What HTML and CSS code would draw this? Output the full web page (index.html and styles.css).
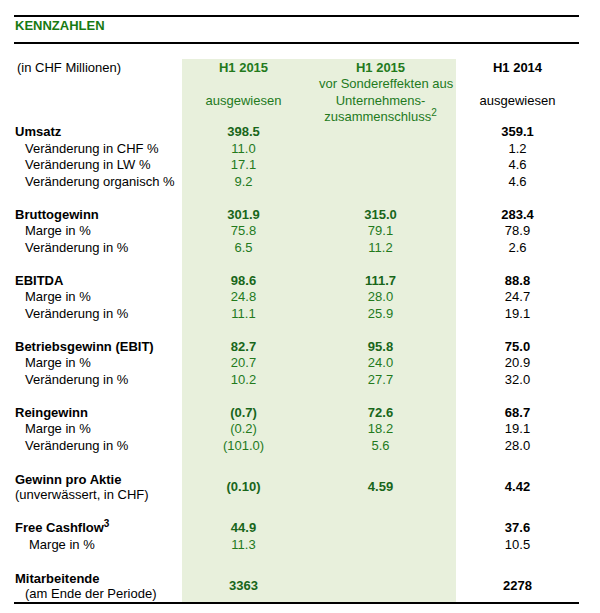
FILE: index.html
```html
<!DOCTYPE html>
<html lang="de">
<head>
<meta charset="utf-8">
<title>Kennzahlen</title>
<link rel="stylesheet" href="styles.css">
</head>
<body>
<div class="page">
  <div class="titlebar"><h1 class="title">KENNZAHLEN</h1></div>
  <div class="table">
    <div class="r head">
      <div class="l unit">(in CHF Millionen)</div>
      <div class="v g"><span class="b">H1 2015</span><span class="blank"></span><span>ausgewiesen</span></div>
      <div class="v g"><span class="b">H1 2015</span><span>vor Sondereffekten aus</span><span>Unternehmens-</span><span>zusammenschluss<sup>2</sup></span></div>
      <div class="v k"><span class="b">H1 2014</span><span class="blank"></span><span>ausgewiesen</span></div>
    </div>

    <div class="r"><div class="l b">Umsatz</div><div class="v g b">398.5</div><div class="v g"></div><div class="v k b">359.1</div></div>
    <div class="r"><div class="l sub">Veränderung in CHF %</div><div class="v g">11.0</div><div class="v g"></div><div class="v k">1.2</div></div>
    <div class="r"><div class="l sub">Veränderung in LW %</div><div class="v g">17.1</div><div class="v g"></div><div class="v k">4.6</div></div>
    <div class="r"><div class="l sub">Veränderung organisch %</div><div class="v g">9.2</div><div class="v g"></div><div class="v k">4.6</div></div>
    <div class="r gap"></div>

    <div class="r"><div class="l b">Bruttogewinn</div><div class="v g b">301.9</div><div class="v g b">315.0</div><div class="v k b">283.4</div></div>
    <div class="r"><div class="l sub">Marge in %</div><div class="v g">75.8</div><div class="v g">79.1</div><div class="v k">78.9</div></div>
    <div class="r"><div class="l sub">Veränderung in %</div><div class="v g">6.5</div><div class="v g">11.2</div><div class="v k">2.6</div></div>
    <div class="r gap"></div>

    <div class="r"><div class="l b">EBITDA</div><div class="v g b">98.6</div><div class="v g b">111.7</div><div class="v k b">88.8</div></div>
    <div class="r"><div class="l sub">Marge in %</div><div class="v g">24.8</div><div class="v g">28.0</div><div class="v k">24.7</div></div>
    <div class="r"><div class="l sub">Veränderung in %</div><div class="v g">11.1</div><div class="v g">25.9</div><div class="v k">19.1</div></div>
    <div class="r gap"></div>

    <div class="r"><div class="l b">Betriebsgewinn (EBIT)</div><div class="v g b">82.7</div><div class="v g b">95.8</div><div class="v k b">75.0</div></div>
    <div class="r"><div class="l sub">Marge in %</div><div class="v g">20.7</div><div class="v g">24.0</div><div class="v k">20.9</div></div>
    <div class="r"><div class="l sub">Veränderung in %</div><div class="v g">10.2</div><div class="v g">27.7</div><div class="v k">32.0</div></div>
    <div class="r gap"></div>

    <div class="r"><div class="l b">Reingewinn</div><div class="v g b">(0.7)</div><div class="v g b">72.6</div><div class="v k b">68.7</div></div>
    <div class="r"><div class="l sub">Marge in %</div><div class="v g">(0.2)</div><div class="v g">18.2</div><div class="v k">19.1</div></div>
    <div class="r"><div class="l sub">Veränderung in %</div><div class="v g">(101.0)</div><div class="v g">5.6</div><div class="v k">28.0</div></div>
    <div class="r gap"></div>

    <div class="r multi"><div class="l"><span class="b">Gewinn pro Aktie</span><span>(unverwässert, in CHF)</span></div><div class="v g b">(0.10)</div><div class="v g b">4.59</div><div class="v k b">4.42</div></div>
    <div class="r gap"></div>

    <div class="r"><div class="l b">Free Cashflow<sup>3</sup></div><div class="v g b">44.9</div><div class="v g"></div><div class="v k b">37.6</div></div>
    <div class="r"><div class="l sub2">Marge in %</div><div class="v g">11.3</div><div class="v g"></div><div class="v k">10.5</div></div>
    <div class="r gap"></div>

    <div class="r multi"><div class="l"><span class="b">Mitarbeitende</span><span class="sub">(am Ende der Periode)</span></div><div class="v g b">3363</div><div class="v g"></div><div class="v k b">2278</div></div>
  </div>
</div>
</body>
</html>
```

FILE: styles.css
```css
* { box-sizing: border-box; }

body {
  margin: 0;
  background: #ffffff;
  font-family: "Liberation Sans", Arial, Helvetica, sans-serif;
  font-size: 13px;
  color: #000000;
}

.page {
  margin-left: 14px;
  width: 565px;
  padding-top: 15px;
}

.titlebar {
  border-top: 2px solid #000;
  border-bottom: 2px solid #000;
  height: 29px;
  padding-top: 1px;
}

.title {
  margin: 0;
  padding-left: 1px;
  font-size: 13px;
  line-height: 15px;
  font-weight: bold;
  color: #177a12;
}

.table {
  margin-top: 15px;
  width: 565px;
  border-bottom: 2px solid #000;
  background: linear-gradient(to right,
    transparent 0, transparent 168px,
    #e8f0dc 168px, #e8f0dc 442px,
    transparent 442px);
}

.r {
  display: grid;
  grid-template-columns: 168px 137px 137px 123px;
  height: 16.5px;
  padding-top: 2px;
  line-height: 14.5px;
}

.r.head {
  line-height: 16.3px;
  height: 64px;
  padding-top: 1px;
}

.r.multi {
  height: 33px;
  padding-top: 2px;
  align-items: center;
}

.r.multi .l span { line-height: 15.5px; }

.l {
  padding-left: 1px;
  white-space: nowrap;
}

.l span { display: block; }

.l.unit { padding-left: 3px; }
.l.sub { padding-left: 11px; }
.l span.sub { padding-left: 10px; }
.l.sub2 { padding-left: 15px; }

.v {
  text-align: center;
  white-space: nowrap;
}

.v.g {
  padding-right: 14px;
  color: #237a1c;
}

.v.g.b { color: #18661a; }

.v.k { color: #000; }

.head .v span { display: block; }
.head .v .blank { height: 16.3px; }

.b { font-weight: bold; }

sup {
  font-size: 10px;
  line-height: 0;
  vertical-align: 5px;
}
```
